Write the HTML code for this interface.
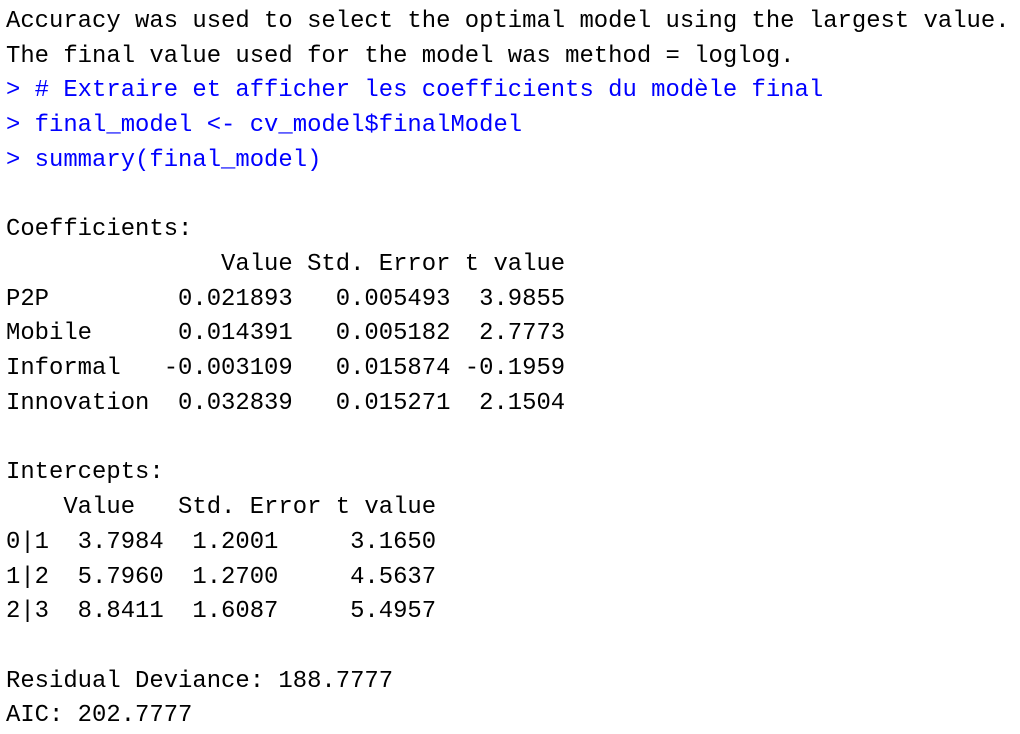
<!DOCTYPE html>
<html><head><meta charset="utf-8"><style>
html,body{margin:0;padding:0;background:#fff;width:1020px;height:734px;overflow:hidden}
pre{margin:0;position:absolute;left:6px;top:5px;font-family:"Liberation Mono",monospace;font-size:23.9px;line-height:34.72px;color:#000;white-space:pre}
.b{color:#0000ff}
</style></head><body>
<pre>Accuracy was used to select the optimal model using the largest value.
The final value used for the model was method = loglog.
<span class="b">&gt; # Extraire et afficher les coefficients du modèle final</span>
<span class="b">&gt; final_model &lt;- cv_model$finalModel</span>
<span class="b">&gt; summary(final_model)</span>

Coefficients:
               Value Std. Error t value
P2P         0.021893   0.005493  3.9855
Mobile      0.014391   0.005182  2.7773
Informal   -0.003109   0.015874 -0.1959
Innovation  0.032839   0.015271  2.1504

Intercepts:
    Value   Std. Error t value
0|1  3.7984  1.2001     3.1650
1|2  5.7960  1.2700     4.5637
2|3  8.8411  1.6087     5.4957

Residual Deviance: 188.7777 
AIC: 202.7777 </pre>
</body></html>
